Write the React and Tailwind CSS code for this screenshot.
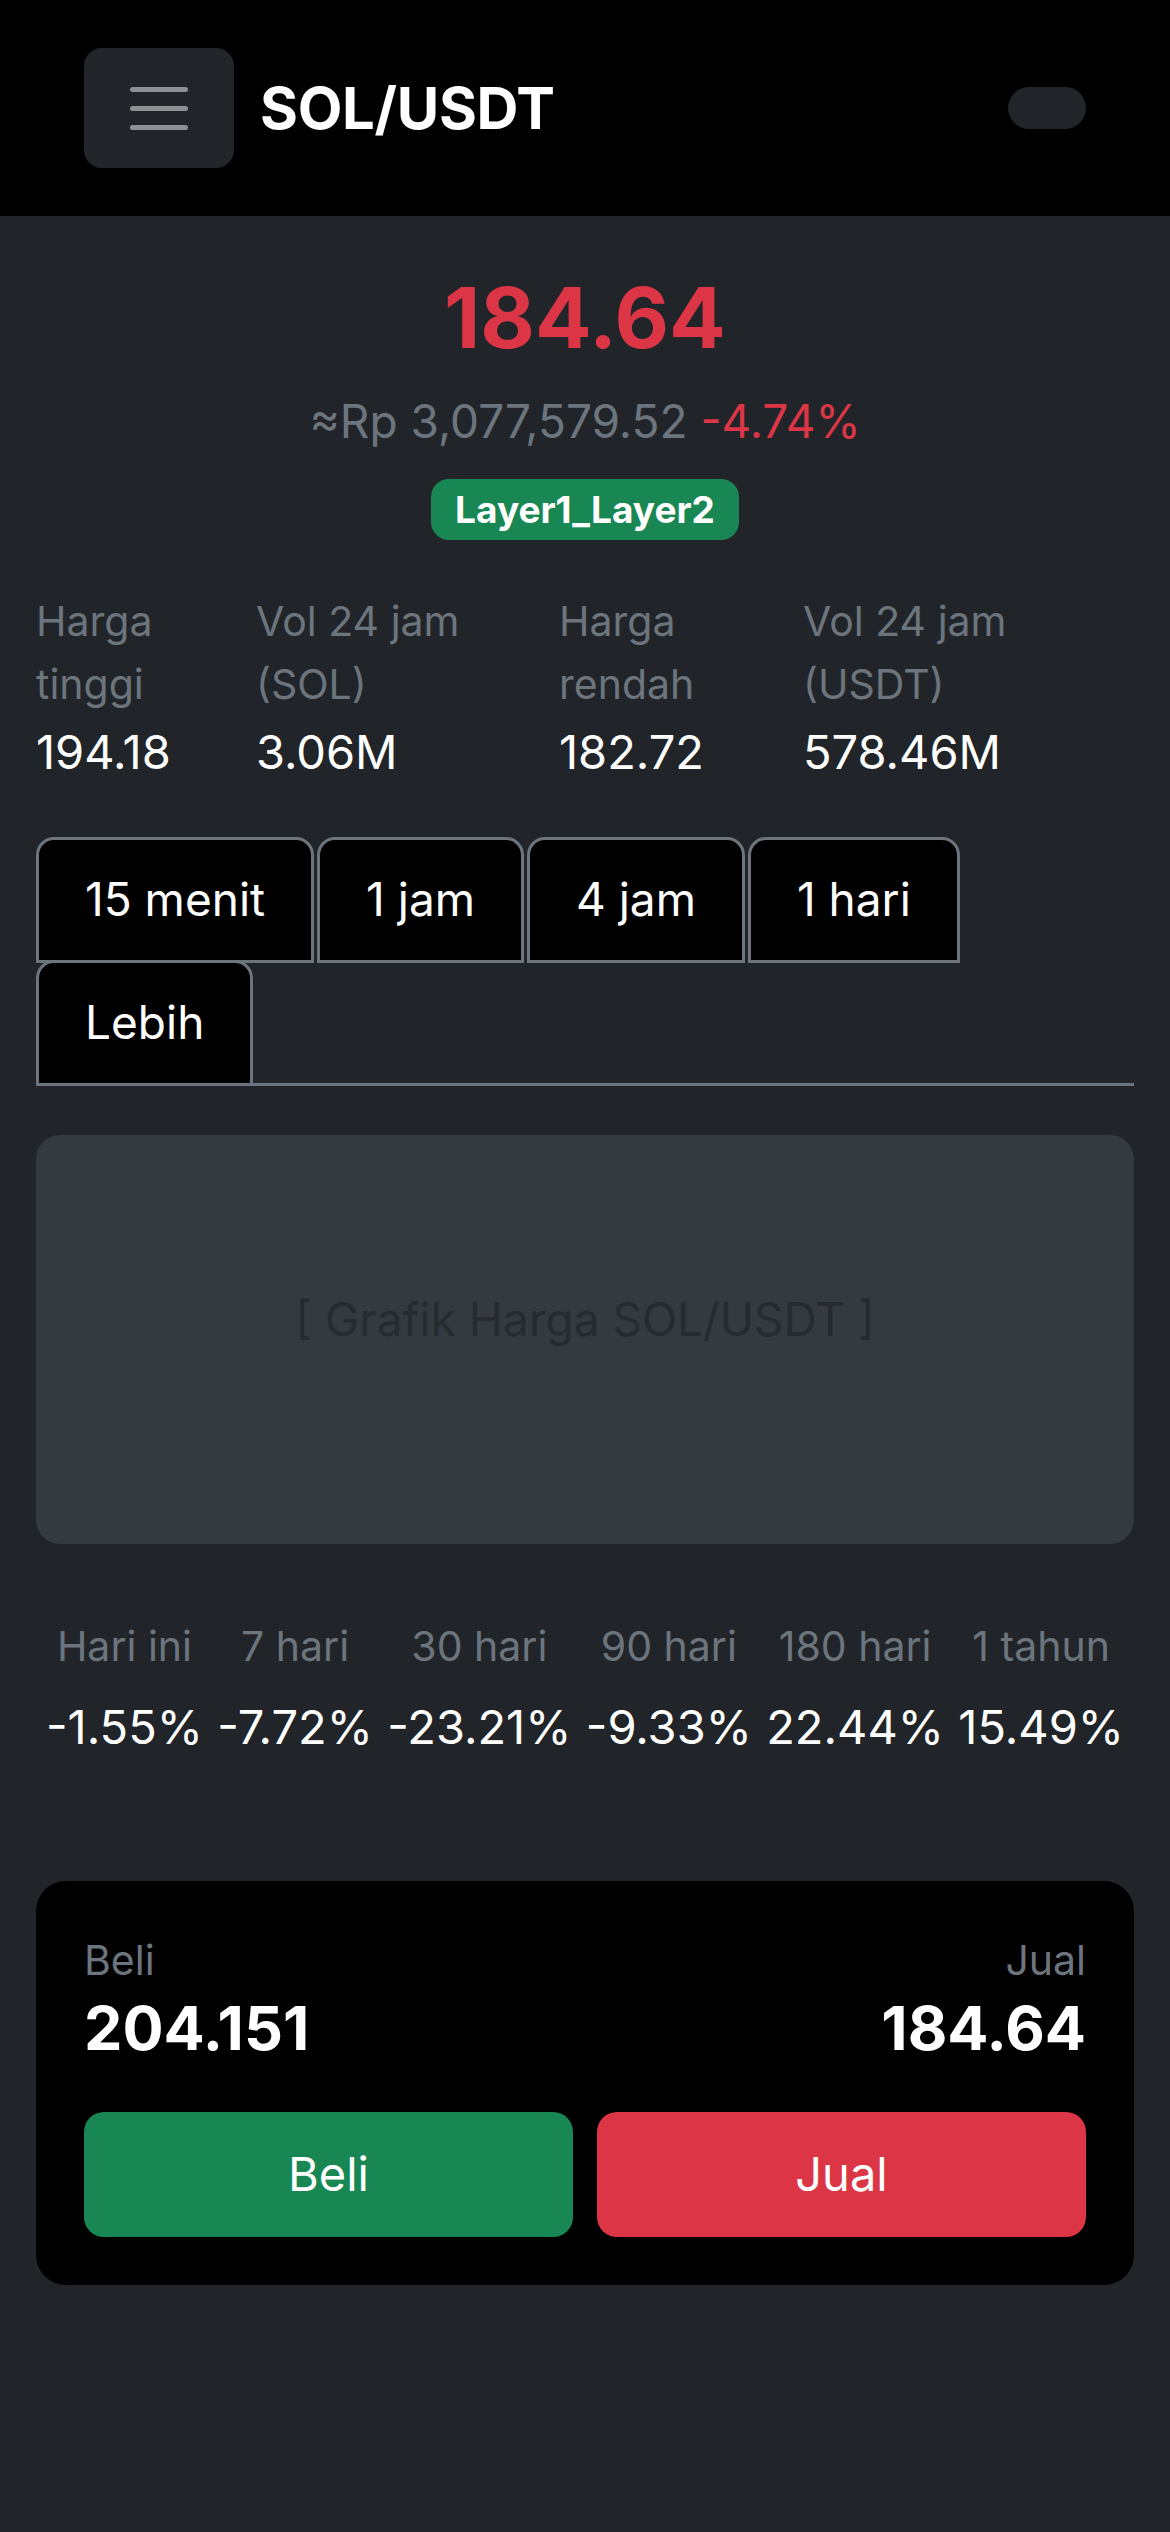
import React, { useState } from "react";

const stats = [
  { label: ["Harga", "tinggi"], value: "194.18", w: "w-[220px]" },
  { label: ["Vol 24 jam", "(SOL)"], value: "3.06M", w: "w-[303px]" },
  { label: ["Harga", "rendah"], value: "182.72", w: "w-[244px]" },
  { label: ["Vol 24 jam", "(USDT)"], value: "578.46M", w: "flex-1" },
];

const tabs = ["15 menit", "1 jam", "4 jam", "1 hari", "Lebih"];

const perf = [
  ["Hari ini", "-1.55%"],
  ["7 hari", "-7.72%"],
  ["30 hari", "-23.21%"],
  ["90 hari", "-9.33%"],
  ["180 hari", "22.44%"],
  ["1 tahun", "15.49%"],
];

export default function App() {
  const [tab, setTab] = useState("15 menit");

  return (
    <div className="min-h-[2532px] bg-[#212529] text-white font-['Inter','Liberation_Sans',sans-serif]">
      {/* top bar */}
      <header className="h-[216px] bg-black px-[84px] flex items-center">
        <button className="w-[150px] h-[120px] rounded-[18px] bg-[#212529] flex flex-col items-center justify-center gap-[14px]">
          <span className="block w-[58px] h-[5px] rounded-full bg-[#8e9194]" />
          <span className="block w-[58px] h-[5px] rounded-full bg-[#8e9194]" />
          <span className="block w-[58px] h-[5px] rounded-full bg-[#8e9194]" />
        </button>
        <h1 className="ml-[26px] text-[58px] font-bold tracking-[-0.3px]">SOL/USDT</h1>
        <div className="ml-auto w-[78px] h-[42px] rounded-full bg-[#212529]" />
      </header>

      <main className="px-[36px] pt-[52px]">
        <div className="text-center">
          <div className="text-[84px] leading-[1.2] font-bold text-[#dc3545]">184.64</div>
          <div className="mt-[16px] text-[46px] leading-[72px] text-[#6c757d]">
            ≈Rp 3,077,579.52 <span className="text-[#dc3545]">-4.74%</span>
          </div>
          <span className="inline-block mt-[22px] px-[24px] py-[12px] rounded-[18px] bg-[#198754] text-[37px] leading-none font-bold">
            Layer1_Layer2
          </span>
        </div>

        <div className="mt-[50px] flex">
          {stats.map((s) => (
            <div key={s.value} className={s.w}>
              <div className="text-[41px] leading-[63px] text-[#6c757d]">
                {s.label[0]}
                <br />
                {s.label[1]}
              </div>
              <div className="text-[47px] leading-[72px]">{s.value}</div>
            </div>
          ))}
        </div>

        <div className="mt-[49px] flex flex-wrap border-b-[3px] border-[#6c757d]">
          {tabs.map((t) => (
            <button
              key={t}
              onClick={() => setTab(t)}
              className="mr-[3px] -mb-[3px] h-[126px] px-[46px] bg-black border-[3px] border-[#6c757d] rounded-t-[18px] text-[46px] text-white">
              {t}
            </button>
          ))}
        </div>

        <div className="mt-[49px] h-[409px] rounded-[24px] bg-[#343a40] flex items-center justify-center pb-[40px]">
          <span className="text-[46px] text-[#272b30]">[ Grafik Harga SOL/USDT ]</span>
        </div>

        <div className="mt-[71px] px-[10px] flex justify-between text-center">
          {perf.map(([l, v]) => (
            <div key={l}>
              <div className="text-[41px] leading-[63px] text-[#6c757d]">{l}</div>
              <div className="mt-[13px] text-[47px] leading-[72px]">{v}</div>
            </div>
          ))}
        </div>

        <div className="mt-[118px] rounded-[30px] bg-black p-[48px]">
          <div className="flex justify-between">
            <div>
              <div className="text-[41px] leading-[63px] text-[#6c757d]">Beli</div>
              <div className="text-[61px] leading-[72px] font-bold">204.151</div>
            </div>
            <div className="text-right">
              <div className="text-[41px] leading-[63px] text-[#6c757d]">Jual</div>
              <div className="text-[61px] leading-[72px] font-bold">184.64</div>
            </div>
          </div>
          <div className="mt-[48px] grid grid-cols-2 gap-[24px]">
            <button className="h-[125px] rounded-[20px] bg-[#198754] text-[47px] text-white">Beli</button>
            <button className="h-[125px] rounded-[20px] bg-[#dc3545] text-[47px] text-white">Jual</button>
          </div>
        </div>
      </main>
    </div>
  );
}
